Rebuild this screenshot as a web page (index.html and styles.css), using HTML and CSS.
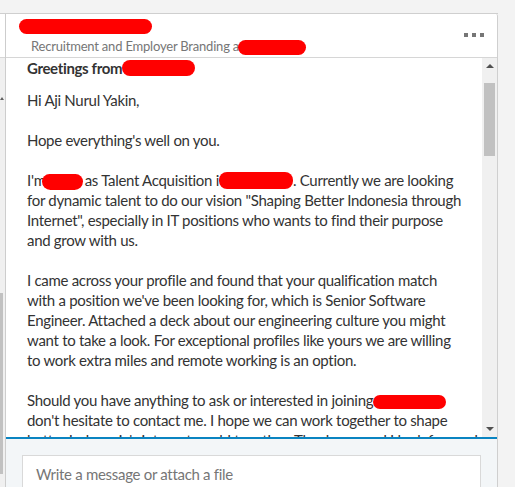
FILE: index.html
```html
<!DOCTYPE html>
<html>
<head>
<meta charset="utf-8">
<link rel="stylesheet" href="styles.css">
</head>
<body>
<div class="frame">
  <div class="strip">
    <div class="strip-top"></div>
    <div class="strip-track">
      <div class="strip-arrow"></div>
      <div class="strip-thumb"></div>
    </div>
  </div>
  <div class="panel">
    <header class="head">
      <div class="head-info">
        <span class="redact redact-name"></span>
        <div class="subtitle">Recruitment and Employer Branding a<span class="redact redact-sub"></span></div>
      </div>
      <div class="dots"><i></i><i></i><i></i></div>
    </header>
    <div class="thread">
      <div class="message">
        <div class="subject">Greetings from<span class="redact redact-greet"></span></div>
        <div class="body">
          <p>Hi Aji Nurul Yakin,</p>
          <p>Hope everything's well on you.</p>
          <p>I'm<span class="redact redact-a"></span>as Talent Acquisition i<span class="redact redact-b"></span>. Currently we are looking<br>for dynamic talent to do our vision "Shaping Better Indonesia through<br>Internet", especially in IT positions who wants to find their purpose<br>and grow with us.</p>
          <p>I came across your profile and found that your qualification match<br>with a position we've been looking for, which is Senior Software<br>Engineer. Attached a deck about our engineering culture you might<br>want to take a look. For exceptional profiles like yours we are willing<br>to work extra miles and remote working is an option.</p>
          <p>Should you have anything to ask or interested in joining<span class="redact redact-c"></span><br>don't hesitate to contact me. I hope we can work together to shape<br>better Indonesia's internet world together. Thank you and I look forward</p>
        </div>
      </div>
      <div class="scrollbar">
        <div class="arrow up"></div>
        <div class="thumb"></div>
        <div class="track-fill"></div>
        <div class="arrow down"></div>
      </div>
    </div>
    <div class="composer">
      <div class="input">Write a message or attach a file</div>
    </div>
  </div>
</div>
</body>
</html>
```

FILE: styles.css
```css
html, body {
  margin: 0;
  padding: 0;
}
body {
  background: #f3f3f3;
  font-family: Lato, "Open Sans", sans-serif;
  color: #333;
  width: 515px;
  height: 487px;
  overflow: hidden;
}
.frame {
  margin-top: 13px;
  width: 498px;
  height: 474px;
  display: flex;
  border-top: 1px solid #cfcfcf;
  box-sizing: border-box;
}
.strip {
  width: 5px;
  border-right: 1px solid #cdcdcd;
  display: flex;
  flex-direction: column;
  flex-shrink: 0;
}
.strip-top {
  height: 43px;
  background: #fff;
  border-bottom: 1px solid #d6d6d6;
}
.strip-track {
  flex: 1;
  background: #f0f0f0;
  display: flex;
  flex-direction: column;
}
.strip-arrow {
  width: 0;
  height: 0;
  margin-top: 39px;
  border-left: 2px solid transparent;
  border-right: 2px solid transparent;
  border-bottom: 3px solid #606060;
}
.strip-thumb {
  width: 3px;
  height: 181px;
  margin-top: 193px;
  background: #c1c1c1;
}
.panel {
  width: 492px;
  flex-shrink: 0;
  display: flex;
  flex-direction: column;
  background: #fff;
  border-right: 1px solid #cfcfcf;
  border-top-right-radius: 2px;
  box-sizing: border-box;
  min-width: 0;
}
.head {
  height: 43px;
  flex-shrink: 0;
  border-bottom: 1px solid #d6d6d6;
  display: flex;
  justify-content: space-between;
  align-items: flex-start;
}
.head-info {
  padding: 5px 0 0 13px;
  display: flex;
  flex-direction: column;
  align-items: flex-start;
}
.redact {
  display: inline-block;
  background: #ff0000;
  border-radius: 8px;
  letter-spacing: 0;
}
.redact-name {
  width: 133px;
  height: 15px;
}
.subtitle {
  margin: 3px 0 0 12px;
  font-size: 13px;
  letter-spacing: -0.2px;
  line-height: 18px;
  color: #767676;
  white-space: nowrap;
}
.redact-sub {
  width: 68px;
  height: 15px;
  vertical-align: -4px;
  margin-left: -1px;
}
.dots {
  display: flex;
  gap: 4px;
  margin: 19px 13px 0 0;
}
.dots i {
  width: 4px;
  height: 4px;
  background: #767676;
}
.thread {
  height: 379px;
  display: flex;
  flex-shrink: 0;
}
.message {
  flex: 1;
  min-width: 0;
  overflow: hidden;
  padding-left: 21px;
  font-size: 15px;
  letter-spacing: -0.3px;
  line-height: 20px;
  white-space: nowrap;
}
.subject {
  font-weight: bold;
  color: #333;
  letter-spacing: -0.35px;
}
.redact-greet {
  width: 73px;
  height: 16px;
  vertical-align: -2px;
  margin-top: -1px;
}
.body {
  margin-top: 12px;
}
.body p {
  margin: 0 0 20px 0;
}
.redact-a {
  width: 41px;
  height: 16px;
  margin: 0 2px 0 -4px;
  vertical-align: -4px;
  border-radius: 8px 8px 9px 9px;
}
.redact-b {
  width: 74px;
  height: 17px;
  margin-left: 0;
  vertical-align: -3px;
}
.redact-c {
  width: 73px;
  height: 14px;
  vertical-align: -3px;
  margin-left: 0;
}
.scrollbar {
  width: 15px;
  background: #f0f0f0;
  display: flex;
  flex-direction: column;
  align-items: center;
  flex-shrink: 0;
}
.arrow {
  width: 0;
  height: 0;
  border-left: 4px solid transparent;
  border-right: 4px solid transparent;
}
.arrow.up {
  margin-top: 6px;
  border-bottom: 4px solid #505050;
}
.thumb {
  width: 11px;
  height: 73px;
  margin-top: 15px;
  background: #c1c1c1;
}
.track-fill {
  flex: 1;
}
.arrow.down {
  margin-bottom: 6px;
  border-top: 4px solid #505050;
}
.composer {
  flex: 1;
  border-top: 2px solid #0a84c1;
  background: #f3f6f8;
  padding: 16px 16px 0 16px;
}
.input {
  background: #fff;
  border: 1px solid #d9d9d9;
  border-bottom: none;
  height: 40px;
  padding: 8px 0 0 13px;
  box-sizing: border-box;
  font-size: 15px;
  letter-spacing: -0.3px;
  line-height: 20px;
  color: #767676;
}
```
